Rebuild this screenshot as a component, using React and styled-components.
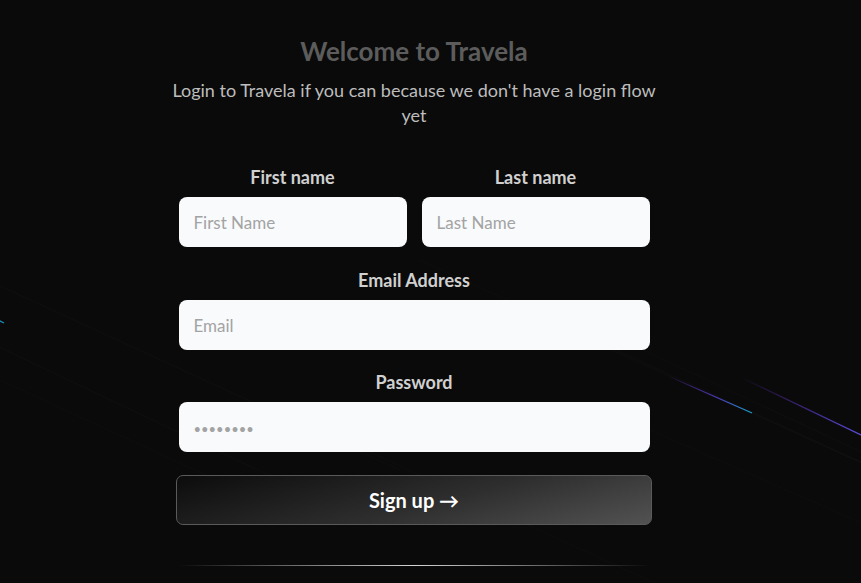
import styled, { createGlobalStyle } from 'styled-components';

const GlobalStyle = createGlobalStyle`
  html, body {
    margin: 0;
    padding: 0;
    background: #0a0a0a;
  }
  body {
    font-family: Lato, "Liberation Sans", sans-serif;
  }
  * { box-sizing: border-box; }
`;

const Page = styled.div`
  position: relative;
  width: 861px;
  height: 583px;
  overflow: hidden;
  background: #0a0a0a;
  display: flex;
  justify-content: center;
  padding: 36px 33px 0 0;
`;

const Beams = styled.svg`
  position: absolute;
  inset: 0;
  pointer-events: none;
`;

const Content = styled.div`
  position: relative;
  width: 476px;
  display: flex;
  flex-direction: column;
  align-items: center;
`;

const Title = styled.h1`
  margin: 0;
  font-size: 26px;
  line-height: 30px;
  font-weight: 700;
  color: #5c5c5c;
`;

const Subtitle = styled.p`
  margin: 12px 0 0;
  width: 492px;
  flex-shrink: 0;
  text-align: center;
  font-size: 18px;
  line-height: 25px;
  color: #bdbdbd;
`;

const Form = styled.form`
  width: 100%;
  margin-top: 38px;
  display: flex;
  flex-direction: column;
  align-items: center;
`;

const Row = styled.div`
  width: 471px;
  display: grid;
  grid-template-columns: ${(p) => (p.$split ? '1fr 1fr' : '1fr')};
  gap: 15px;
  margin-bottom: ${(p) => p.$gap || 0}px;
`;

const Field = styled.div`
  display: flex;
  flex-direction: column;
  align-items: center;
`;

const Label = styled.label`
  font-size: 18px;
  line-height: 22px;
  font-weight: 700;
  color: #d0d0d0;
  margin-bottom: 9px;
`;

const Input = styled.input`
  width: 100%;
  height: 50px;
  border: none;
  border-radius: 8px;
  background: #f8fafc;
  padding: 0 15px;
  font-family: inherit;
  font-size: 17px;
  color: #333;
  outline: none;

  &::placeholder {
    color: #a3a3a3;
    font-size: ${(p) => (p.$dots ? '13px' : '17px')};
  }
`;

const Button = styled.button`
  width: 476px;
  height: 50px;
  margin-top: 23px;
  border: 1px solid #5a5a5a;
  border-radius: 7px;
  background: linear-gradient(165deg, #0c0c0c 0%, #2e2e2e 55%, #525252 100%);
  color: #fff;
  font-family: inherit;
  font-size: 20px;
  font-weight: 700;
  cursor: pointer;
`;

const Divider = styled.div`
  width: 472px;
  height: 1px;
  margin-top: 40px;
  background: linear-gradient(90deg, transparent, #d4d4d4 50%, transparent);
`;

const faint = [
  [-100, 240, 400, 470],
  [-100, 300, 300, 490],
  [300, 420, 800, 650],
  [500, 300, 900, 480],
  [600, 330, 900, 470],
  [420, 260, 900, 480],
  [650, 430, 900, 540],
  [0, 380, 260, 500],
];

export default function App() {
  return (
    <>
      <GlobalStyle />
      <Page>
        <Beams width="861" height="583">
          <defs>
            <linearGradient id="b1" x1="0" y1="0" x2="1" y2="0">
              <stop offset="0" stopColor="#6d28d9" stopOpacity="0" />
              <stop offset="0.6" stopColor="#4c3bc0" />
              <stop offset="1" stopColor="#18a0c9" />
            </linearGradient>
            <linearGradient id="b2" x1="0" y1="0" x2="1" y2="0">
              <stop offset="0" stopColor="#6d28d9" stopOpacity="0" />
              <stop offset="1" stopColor="#5b4fe0" />
            </linearGradient>
          </defs>
          {faint.map(([x1, y1, x2, y2], i) => (
            <line key={i} x1={x1} y1={y1} x2={x2} y2={y2} stroke="rgba(255,255,255,0.02)" strokeWidth="1" />
          ))}
          <line x1="668" y1="376" x2="752" y2="413" stroke="url(#b1)" strokeWidth="1.3" />
          <line x1="740" y1="377" x2="861" y2="435" stroke="url(#b2)" strokeWidth="1.3" />
          <line x1="-6" y1="318" x2="4" y2="323" stroke="#1c8fb8" strokeWidth="1.3" />
        </Beams>
        <Content>
          <Title>Welcome to Travela</Title>
          <Subtitle>Login to Travela if you can because we don't have a login flow yet</Subtitle>
          <Form onSubmit={(e) => e.preventDefault()}>
            <Row $split $gap={22}>
              <Field>
                <Label htmlFor="first">First name</Label>
                <Input id="first" placeholder="First Name" />
              </Field>
              <Field>
                <Label htmlFor="last">Last name</Label>
                <Input id="last" placeholder="Last Name" />
              </Field>
            </Row>
            <Row $gap={21}>
              <Field>
                <Label htmlFor="email">Email Address</Label>
                <Input id="email" type="email" placeholder="Email" />
              </Field>
            </Row>
            <Row>
              <Field>
                <Label htmlFor="password">Password</Label>
                <Input id="password" type="password" placeholder="••••••••" $dots />
              </Field>
            </Row>
            <Button type="submit">Sign up →</Button>
          </Form>
          <Divider />
        </Content>
      </Page>
    </>
  );
}
